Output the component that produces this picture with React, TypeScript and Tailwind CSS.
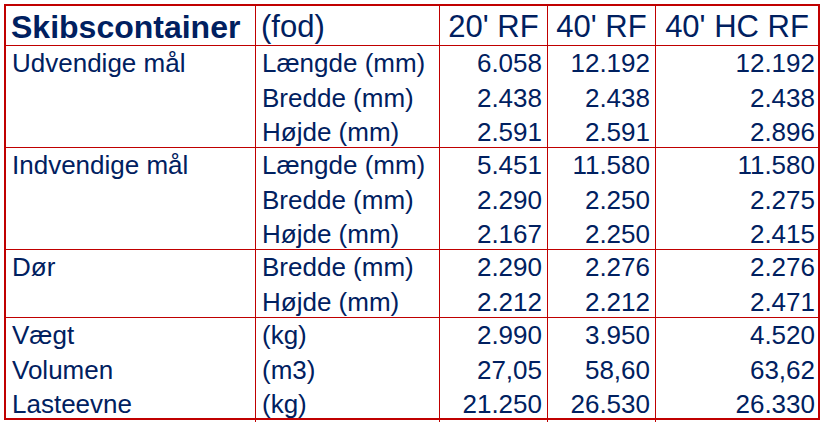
const sections = [
  {
    label: 'Udvendige mål',
    h: 'h-[102px] border-b',
    rows: [
      ['Længde (mm)', '6.058', '12.192', '12.192'],
      ['Bredde (mm)', '2.438', '2.438', '2.438'],
      ['Højde (mm)', '2.591', '2.591', '2.896'],
    ],
  },
  {
    label: 'Indvendige mål',
    h: 'h-[102px] border-b',
    rows: [
      ['Længde (mm)', '5.451', '11.580', '11.580'],
      ['Bredde (mm)', '2.290', '2.250', '2.275'],
      ['Højde (mm)', '2.167', '2.250', '2.415'],
    ],
  },
  {
    label: 'Dør',
    h: 'h-[68px] border-b',
    rows: [
      ['Bredde (mm)', '2.290', '2.276', '2.276'],
      ['Højde (mm)', '2.212', '2.212', '2.471'],
    ],
  },
  {
    label: null,
    h: 'h-[100px]',
    rows: [
      ['Vægt', '(kg)', '2.990', '3.950', '4.520'],
      ['Volumen', '(m3)', '27,05', '58,60', '63,62'],
      ['Lasteevne', '(kg)', '21.250', '26.530', '26.330'],
    ],
  },
]

const cols = 'grid grid-cols-[250px_184px_108px_108px_162px]'
const cell = 'border-r border-[#c00000]'

function Section({ s }: { s: (typeof sections)[number] }) {
  // rows without a group label carry their own first column
  const rows = s.rows.map((r) => (s.label ? ['', ...r] : r))
  return (
    <div className={`${s.h} border-[#c00000] flex flex-col`}>
      {rows.map((r, i) => (
        <div key={i} className={`${cols} flex-1 items-center`}>
          <div className={`${cell} h-full pl-[6px] pt-[1px]`}>{s.label ? (i === 0 ? s.label : '') : r[0]}</div>
          <div className={`${cell} h-full pl-[6px] pt-[1px]`}>{r[1]}</div>
          <div className={`${cell} h-full pr-[5px] pt-[1px] text-right`}>{r[2]}</div>
          <div className={`${cell} h-full pr-[5px] pt-[1px] text-right`}>{r[3]}</div>
          <div className="h-full pr-[3px] pt-[1px] text-right">{r[4]}</div>
        </div>
      ))}
    </div>
  )
}

export default function App() {
  return (
    <div className="w-[824px] h-[424px] bg-white pt-[4px] pl-[4px]">
      <div
        className="w-[816px] h-[416px] border-2 border-[#c00000] text-[#002060] text-[26px] leading-[33.6px]"
        style={{ fontFamily: '"Liberation Sans", Arial, sans-serif' }}
      >
        <div className={`${cols} h-[40px] border-b border-[#c00000] text-[31px] leading-[36px]`}>
          <div className={`${cell} pl-[5px] pt-[3px] text-[32px] font-bold`}>Skibscontainer</div>
          <div className={`${cell} pl-[5px] pt-[3px]`}>(fod)</div>
          <div className={`${cell} pt-[3px] text-center`}>20' RF</div>
          <div className={`${cell} pt-[3px] text-center`}>40' RF</div>
          <div className="pt-[3px] text-center">40' HC RF</div>
        </div>
        {sections.map((s, i) => (
          <Section key={i} s={s} />
        ))}
      </div>
    </div>
  )
}
